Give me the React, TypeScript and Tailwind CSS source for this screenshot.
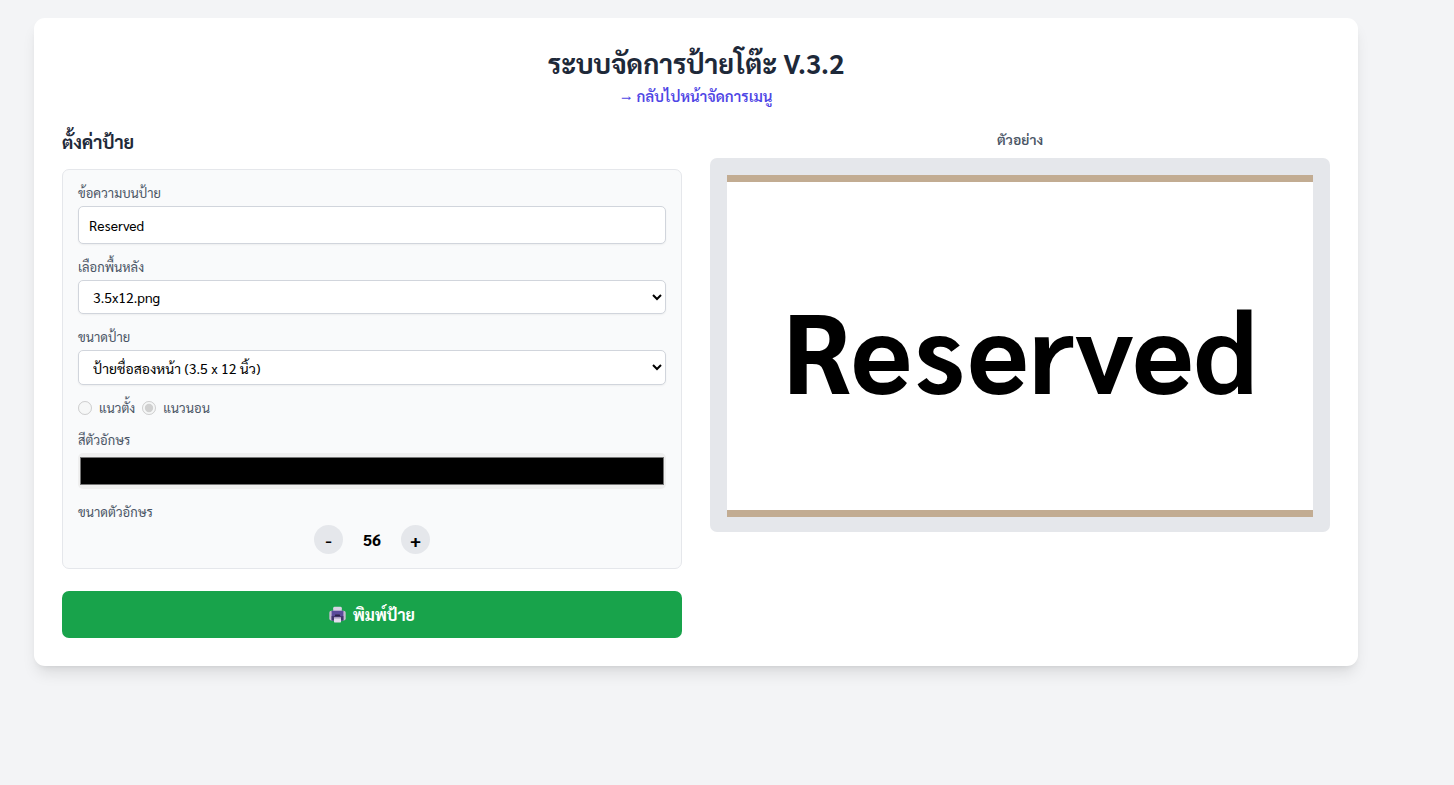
import { useState } from "react"
import type { ReactNode } from "react"

const BACKGROUNDS = ["3.5x12.png"]
const SIZES = ["ป้ายชื่อสองหน้า (3.5 x 12 นิ้ว)"]

const controlClass =
	"block w-full rounded-[5px] border border-gray-300 bg-white text-sm text-black shadow-xs"

const PrinterIcon = () => (
	<svg viewBox="0 0 17 17" className="size-[17px]" aria-hidden="true">
		<rect x="4.2" y="0.8" width="8.6" height="6" rx="1.4" fill="#d9d3e4" />
		<rect x="0.3" y="4.8" width="16.4" height="9.8" rx="2" fill="#c3bad0" />
		<rect x="2.6" y="4.8" width="11.8" height="9.6" rx="0.5" fill="#5b4a9b" />
		<rect x="2.6" y="10" width="11.8" height="4.4" fill="#43366f" />
		<rect x="6" y="8.6" width="5" height="1.4" rx="0.6" fill="#2b2148" />
		<rect x="5" y="11.2" width="7" height="5.2" rx="0.6" fill="#e3dcec" />
		<rect x="5" y="11.2" width="7" height="1.3" fill="#a596bd" />
	</svg>
)

interface FieldProps {
	id: string
	label: string
	children: ReactNode
}

const Field = ({ id, label, children }: FieldProps) => {
	return (
		<div className="flex flex-col gap-1">
			<label htmlFor={id} className="text-[13px] leading-[18px] text-gray-600">
				{label}
			</label>
			{children}
		</div>
	)
}

interface StepButtonProps {
	label: string
	onClick: () => void
	children: ReactNode
}

const StepButton = ({ label, onClick, children }: StepButtonProps) => {
	return (
		<button
			type="button"
			aria-label={label}
			onClick={onClick}
			className="flex size-[29px] items-center justify-center rounded-full bg-gray-200 text-lg font-bold text-black hover:bg-gray-300"
		>
			{children}
		</button>
	)
}

interface PreviewProps {
	text: string
	color: string
	fontSize: number
}

const Preview = ({ text, color, fontSize }: PreviewProps) => {
	return (
		<section>
			<h3 className="mb-[9px] text-center text-sm leading-5 font-semibold text-gray-600">
				ตัวอย่าง
			</h3>
			<div className="rounded-[7px] bg-gray-200 px-[17px] pt-[17px] pb-[15px]">
				<div className="flex aspect-[12/7] items-center justify-center overflow-hidden border-y-[7px] border-[#c2ac92] bg-white">
					<span
						className="leading-none font-bold whitespace-nowrap"
						style={{ color, fontSize: Math.round(fontSize * 2.04) }}
					>
						{text}
					</span>
				</div>
			</div>
		</section>
	)
}

export default function App() {
	const [text, setText] = useState("Reserved")
	const [color, setColor] = useState("#000000")
	const [fontSize, setFontSize] = useState(56)

	return (
		<div className="min-h-screen bg-gray-100 pt-[18px] pr-24 pb-[18px] pl-[34px] font-['Sarabun','Noto_Sans_Thai',sans-serif]">
			<main className="rounded-[11px] bg-white p-7 shadow-lg">
				<header className="mb-[23px] flex flex-col items-center gap-[7px]">
					<h1 className="text-[27px] leading-[33px] font-bold text-gray-800">
						ระบบจัดการป้ายโต๊ะ V.3.2
					</h1>
					<a
						href="#menu"
						className="text-[15px] leading-5 font-semibold text-[#4f46e5] hover:underline"
					>
						→ กลับไปหน้าจัดการเมนู
					</a>
				</header>

				<div className="grid gap-7 lg:grid-cols-2">
					<section>
						<h2 className="mb-[15px] text-lg leading-[25px] font-bold text-gray-800">
							ตั้งค่าป้าย
						</h2>
						<div className="flex flex-col gap-[14px] rounded-[7px] border border-gray-200 bg-gray-50 px-[15px] py-[14px]">
							<Field id="sign-text" label="ข้อความบนป้าย">
								<input
									id="sign-text"
									type="text"
									value={text}
									onChange={(e) => setText(e.target.value)}
									className={`${controlClass} h-[38px] px-[10px]`}
								/>
							</Field>
							<Field id="sign-background" label="เลือกพื้นหลัง">
								<select id="sign-background" className={`${controlClass} h-[34px] pl-[10px]`}>
									{BACKGROUNDS.map((name) => (
										<option key={name}>{name}</option>
									))}
								</select>
							</Field>
							<Field id="sign-size" label="ขนาดป้าย">
								<select id="sign-size" className={`${controlClass} h-[35px] pl-[10px]`}>
									{SIZES.map((name) => (
										<option key={name}>{name}</option>
									))}
								</select>
							</Field>
							<div className="flex gap-[7px] text-[13px] leading-[18px] text-gray-600">
								<label className="flex items-center gap-[7px]">
									<input type="radio" name="orientation" disabled className="size-[14px]" />
									แนวตั้ง
								</label>
								<label className="flex items-center gap-[7px]">
									<input
										type="radio"
										name="orientation"
										disabled
										defaultChecked
										className="size-[14px]"
									/>
									แนวนอน
								</label>
							</div>
							<Field id="sign-color" label="สีตัวอักษร">
								<input
									id="sign-color"
									type="color"
									value={color}
									onChange={(e) => setColor(e.target.value)}
									className="block h-9 w-full rounded-[5px] bg-[#efefef] px-0"
								/>
							</Field>
							<div>
								<p className="mb-1 text-[13px] leading-[18px] text-gray-600">ขนาดตัวอักษร</p>
								<div className="flex items-center justify-center">
									<StepButton label="ลดขนาด" onClick={() => setFontSize(fontSize - 1)}>
										-
									</StepButton>
									<output className="w-[58px] text-center text-base leading-6 font-bold text-black">
										{fontSize}
									</output>
									<StepButton label="เพิ่มขนาด" onClick={() => setFontSize(fontSize + 1)}>
										+
									</StepButton>
								</div>
							</div>
						</div>
						<button
							type="button"
							onClick={() => window.print()}
							className="mt-[22px] flex h-[47px] w-full items-center justify-center gap-[7px] rounded-[7px] bg-[#18a34b] text-base font-bold text-white hover:bg-green-700"
						>
							<PrinterIcon />
							พิมพ์ป้าย
						</button>
					</section>

					<Preview text={text} color={color} fontSize={fontSize} />
				</div>
			</main>
		</div>
	)
}
